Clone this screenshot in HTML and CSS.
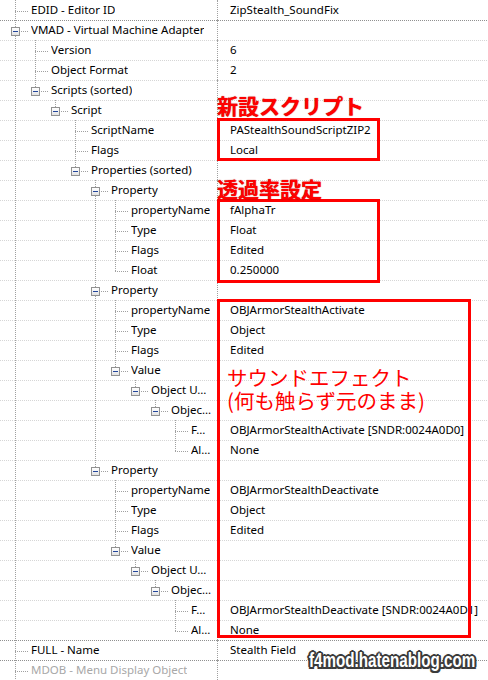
FILE: index.html
```html
<!DOCTYPE html>
<html lang="ja">
<head>
<meta charset="utf-8">
<title>VMAD</title>
<link rel="stylesheet" href="styles.css">
</head>
<body>
<div class="tree">
  <div class="row"><div class="name"><span class="c t"></span><span class="label">EDID - Editor ID</span></div><div class="val">ZipStealth_SoundFix</div></div>
  <div class="row sep"><div class="name"><span class="c t"><i class="box"></i></span><span class="label">VMAD - Virtual Machine Adapter</span></div><div class="val"></div></div>
  <div class="row"><div class="name"><span class="g v"></span><span class="c t"></span><span class="label">Version</span></div><div class="val">6</div></div>
  <div class="row"><div class="name"><span class="g v"></span><span class="c t"></span><span class="label">Object Format</span></div><div class="val">2</div></div>
  <div class="row"><div class="name"><span class="g v"></span><span class="c l"><i class="box"></i></span><span class="label">Scripts (sorted)</span></div><div class="val"></div></div>
  <div class="row"><div class="name"><span class="g v"></span><span class="g"></span><span class="c l"><i class="box"></i></span><span class="label">Script</span></div><div class="val"></div></div>
  <div class="row"><div class="name"><span class="g v"></span><span class="g"></span><span class="g"></span><span class="c t"></span><span class="label">ScriptName</span></div><div class="val">PAStealthSoundScriptZIP2</div></div>
  <div class="row"><div class="name"><span class="g v"></span><span class="g"></span><span class="g"></span><span class="c t"></span><span class="label">Flags</span></div><div class="val">Local</div></div>
  <div class="row"><div class="name"><span class="g v"></span><span class="g"></span><span class="g"></span><span class="c l"><i class="box"></i></span><span class="label">Properties (sorted)</span></div><div class="val"></div></div>

  <div class="row"><div class="name"><span class="g v"></span><span class="g"></span><span class="g"></span><span class="g"></span><span class="c t"><i class="box"></i></span><span class="label">Property</span></div><div class="val"></div></div>
  <div class="row"><div class="name"><span class="g v"></span><span class="g"></span><span class="g"></span><span class="g"></span><span class="g v"></span><span class="c t"></span><span class="label">propertyName</span></div><div class="val">fAlphaTr</div></div>
  <div class="row"><div class="name"><span class="g v"></span><span class="g"></span><span class="g"></span><span class="g"></span><span class="g v"></span><span class="c t"></span><span class="label">Type</span></div><div class="val">Float</div></div>
  <div class="row"><div class="name"><span class="g v"></span><span class="g"></span><span class="g"></span><span class="g"></span><span class="g v"></span><span class="c t"></span><span class="label">Flags</span></div><div class="val">Edited</div></div>
  <div class="row"><div class="name"><span class="g v"></span><span class="g"></span><span class="g"></span><span class="g"></span><span class="g v"></span><span class="c l"></span><span class="label">Float</span></div><div class="val">0.250000</div></div>

  <div class="row"><div class="name"><span class="g v"></span><span class="g"></span><span class="g"></span><span class="g"></span><span class="c t"><i class="box"></i></span><span class="label">Property</span></div><div class="val"></div></div>
  <div class="row"><div class="name"><span class="g v"></span><span class="g"></span><span class="g"></span><span class="g"></span><span class="g v"></span><span class="c t"></span><span class="label">propertyName</span></div><div class="val">OBJArmorStealthActivate</div></div>
  <div class="row"><div class="name"><span class="g v"></span><span class="g"></span><span class="g"></span><span class="g"></span><span class="g v"></span><span class="c t"></span><span class="label">Type</span></div><div class="val">Object</div></div>
  <div class="row"><div class="name"><span class="g v"></span><span class="g"></span><span class="g"></span><span class="g"></span><span class="g v"></span><span class="c t"></span><span class="label">Flags</span></div><div class="val">Edited</div></div>
  <div class="row"><div class="name"><span class="g v"></span><span class="g"></span><span class="g"></span><span class="g"></span><span class="g v"></span><span class="c l"><i class="box"></i></span><span class="label">Value</span></div><div class="val"></div></div>
  <div class="row"><div class="name"><span class="g v"></span><span class="g"></span><span class="g"></span><span class="g"></span><span class="g v"></span><span class="g"></span><span class="c l"><i class="box"></i></span><span class="label">Object U…</span></div><div class="val"></div></div>
  <div class="row"><div class="name"><span class="g v"></span><span class="g"></span><span class="g"></span><span class="g"></span><span class="g v"></span><span class="g"></span><span class="g"></span><span class="c l"><i class="box"></i></span><span class="label">Objec…</span></div><div class="val"></div></div>
  <div class="row"><div class="name"><span class="g v"></span><span class="g"></span><span class="g"></span><span class="g"></span><span class="g v"></span><span class="g"></span><span class="g"></span><span class="g"></span><span class="c t"></span><span class="label">F…</span></div><div class="val">OBJArmorStealthActivate [SNDR:0024A0D0]</div></div>
  <div class="row"><div class="name"><span class="g v"></span><span class="g"></span><span class="g"></span><span class="g"></span><span class="g v"></span><span class="g"></span><span class="g"></span><span class="g"></span><span class="c l"></span><span class="label">Al…</span></div><div class="val">None</div></div>

  <div class="row"><div class="name"><span class="g v"></span><span class="g"></span><span class="g"></span><span class="g"></span><span class="c l"><i class="box"></i></span><span class="label">Property</span></div><div class="val"></div></div>
  <div class="row"><div class="name"><span class="g v"></span><span class="g"></span><span class="g"></span><span class="g"></span><span class="g"></span><span class="c t"></span><span class="label">propertyName</span></div><div class="val">OBJArmorStealthDeactivate</div></div>
  <div class="row"><div class="name"><span class="g v"></span><span class="g"></span><span class="g"></span><span class="g"></span><span class="g"></span><span class="c t"></span><span class="label">Type</span></div><div class="val">Object</div></div>
  <div class="row"><div class="name"><span class="g v"></span><span class="g"></span><span class="g"></span><span class="g"></span><span class="g"></span><span class="c t"></span><span class="label">Flags</span></div><div class="val">Edited</div></div>
  <div class="row"><div class="name"><span class="g v"></span><span class="g"></span><span class="g"></span><span class="g"></span><span class="g"></span><span class="c l"><i class="box"></i></span><span class="label">Value</span></div><div class="val"></div></div>
  <div class="row"><div class="name"><span class="g v"></span><span class="g"></span><span class="g"></span><span class="g"></span><span class="g"></span><span class="g"></span><span class="c l"><i class="box"></i></span><span class="label">Object U…</span></div><div class="val"></div></div>
  <div class="row"><div class="name"><span class="g v"></span><span class="g"></span><span class="g"></span><span class="g"></span><span class="g"></span><span class="g"></span><span class="g"></span><span class="c l"><i class="box"></i></span><span class="label">Objec…</span></div><div class="val"></div></div>
  <div class="row"><div class="name"><span class="g v"></span><span class="g"></span><span class="g"></span><span class="g"></span><span class="g"></span><span class="g"></span><span class="g"></span><span class="g"></span><span class="c t"></span><span class="label">F…</span></div><div class="val">OBJArmorStealthDeactivate [SNDR:0024A0D1]</div></div>
  <div class="row"><div class="name"><span class="g v"></span><span class="g"></span><span class="g"></span><span class="g"></span><span class="g"></span><span class="g"></span><span class="g"></span><span class="g"></span><span class="c l"></span><span class="label">Al…</span></div><div class="val">None</div></div>

  <div class="row sep"><div class="name"><span class="c t"></span><span class="label">FULL - Name</span></div><div class="val">Stealth Field</div></div>
  <div class="row sep"><div class="name"><span class="c t"></span><span class="label disabled">MDOB - Menu Display Object</span></div><div class="val"></div></div>
</div>

<div class="notes">
  <div class="redbox rb1"></div>
  <div class="redbox rb2"></div>
  <div class="redbox rb3"></div>
  <div class="tag tag1">新設スクリプト</div>
  <div class="tag tag2">透過率設定</div>
  <div class="tag sfx">サウンドエフェクト<br>(何も触らず元のまま)</div>
  <div class="wm">f4mod.hatenablog.com</div>
</div>
</body>
</html>
```
FILE: styles.css
```css
* { box-sizing: border-box; }
html, body { margin: 0; padding: 0; background: #fff; }
body {
  font-family: "Noto Sans", "Segoe UI", sans-serif;
  font-size: 11.5px;
  color: #000;
  width: 488px;
  height: 680px;
  overflow: hidden;
  position: relative;
}
.tree { display: flex; flex-direction: column; }
.row {
  display: flex;
  height: 20px;
  line-height: 20px;
  background: repeating-linear-gradient(to right, #d6d6d6 0 1px, transparent 1px 2px) 0 0 / 100% 1px no-repeat;
}
.row:first-child { background: none; }
.row.sep {
  background: repeating-linear-gradient(to right, #909090 0 1px, transparent 1px 2px) 0 0 / 100% 1px no-repeat;
}
.name {
  width: 218px;
  flex: none;
  display: flex;
  padding-left: 5px;
  border-right: 1px dotted #a0a0a0;
  overflow: hidden;
}
.g { width: 20px; height: 20px; flex: none; }
.v {
  background: repeating-linear-gradient(to bottom, #a0a0a0 0 1px, transparent 1px 2px) 10px 0 / 1px 20px no-repeat;
}
.c { width: 26px; height: 20px; flex: none; }
.c.t {
  background:
    repeating-linear-gradient(to right, #a0a0a0 0 1px, transparent 1px 2px) 10px 11px / 13px 1px no-repeat,
    repeating-linear-gradient(to bottom, #a0a0a0 0 1px, transparent 1px 2px) 10px 0 / 1px 20px no-repeat;
}
.c.l {
  background:
    repeating-linear-gradient(to right, #a0a0a0 0 1px, transparent 1px 2px) 10px 11px / 13px 1px no-repeat,
    repeating-linear-gradient(to bottom, #a0a0a0 0 1px, transparent 1px 2px) 10px 0 / 1px 12px no-repeat;
}
.box {
  display: flex;
  align-items: center;
  justify-content: center;
  width: 9px;
  height: 9px;
  margin: 7px 0 0 6px;
  border: 1px solid #919191;
  background: linear-gradient(#ffffff, #e2e2e2);
}
.box::before {
  content: "";
  width: 5px;
  height: 1px;
  background: #22449a;
}
.label { white-space: nowrap; overflow: hidden; }
.label.disabled { color: #a8a8a8; }
.val {
  flex: 1;
  padding-left: 12px;
  white-space: nowrap;
  overflow: hidden;
}

.notes { position: absolute; left: 0; top: 0; width: 488px; height: 680px; pointer-events: none; }
.redbox { position: absolute; border: 3px solid #ff0000; }
.rb1 { left: 217px; top: 118px; width: 163px; height: 43px; }
.rb2 { left: 217px; top: 199px; width: 163px; height: 84px; }
.rb3 { left: 217px; top: 299px; width: 254px; height: 339px; }
.tag {
  position: absolute;
  font-family: "Noto Sans CJK JP", "Noto Sans", sans-serif;
  font-weight: 700;
  font-size: 21px;
  line-height: 21px;
  color: #ff0000;
  white-space: nowrap;
  text-shadow: 0 0 1px #a00000;
}
.tag1 { left: 217px; top: 95px; }
.tag2 { left: 217px; top: 178px; }
.sfx {
  left: 227px;
  top: 366px;
  font-weight: 400;
  font-size: 20.5px;
  line-height: 23px;
  text-shadow: none;
}
.wm {
  position: absolute;
  left: 309px;
  top: 649px;
  font-family: "Liberation Sans", Arial, sans-serif;
  font-weight: 700;
  font-size: 20px;
  line-height: 22px;
  color: #ffffff;
  white-space: nowrap;
  transform: scaleX(0.76);
  transform-origin: 0 50%;
  text-shadow:
    2.5px 0 0 #3a3a3a, -2.5px 0 0 #3a3a3a, 0 2px 0 #3a3a3a, 0 -2px 0 #3a3a3a,
    2px 1.5px 0 #3a3a3a, -2px 1.5px 0 #3a3a3a, 2px -1.5px 0 #3a3a3a, -2px -1.5px 0 #3a3a3a,
    0 0 4px #9a9a9a;
}
```
